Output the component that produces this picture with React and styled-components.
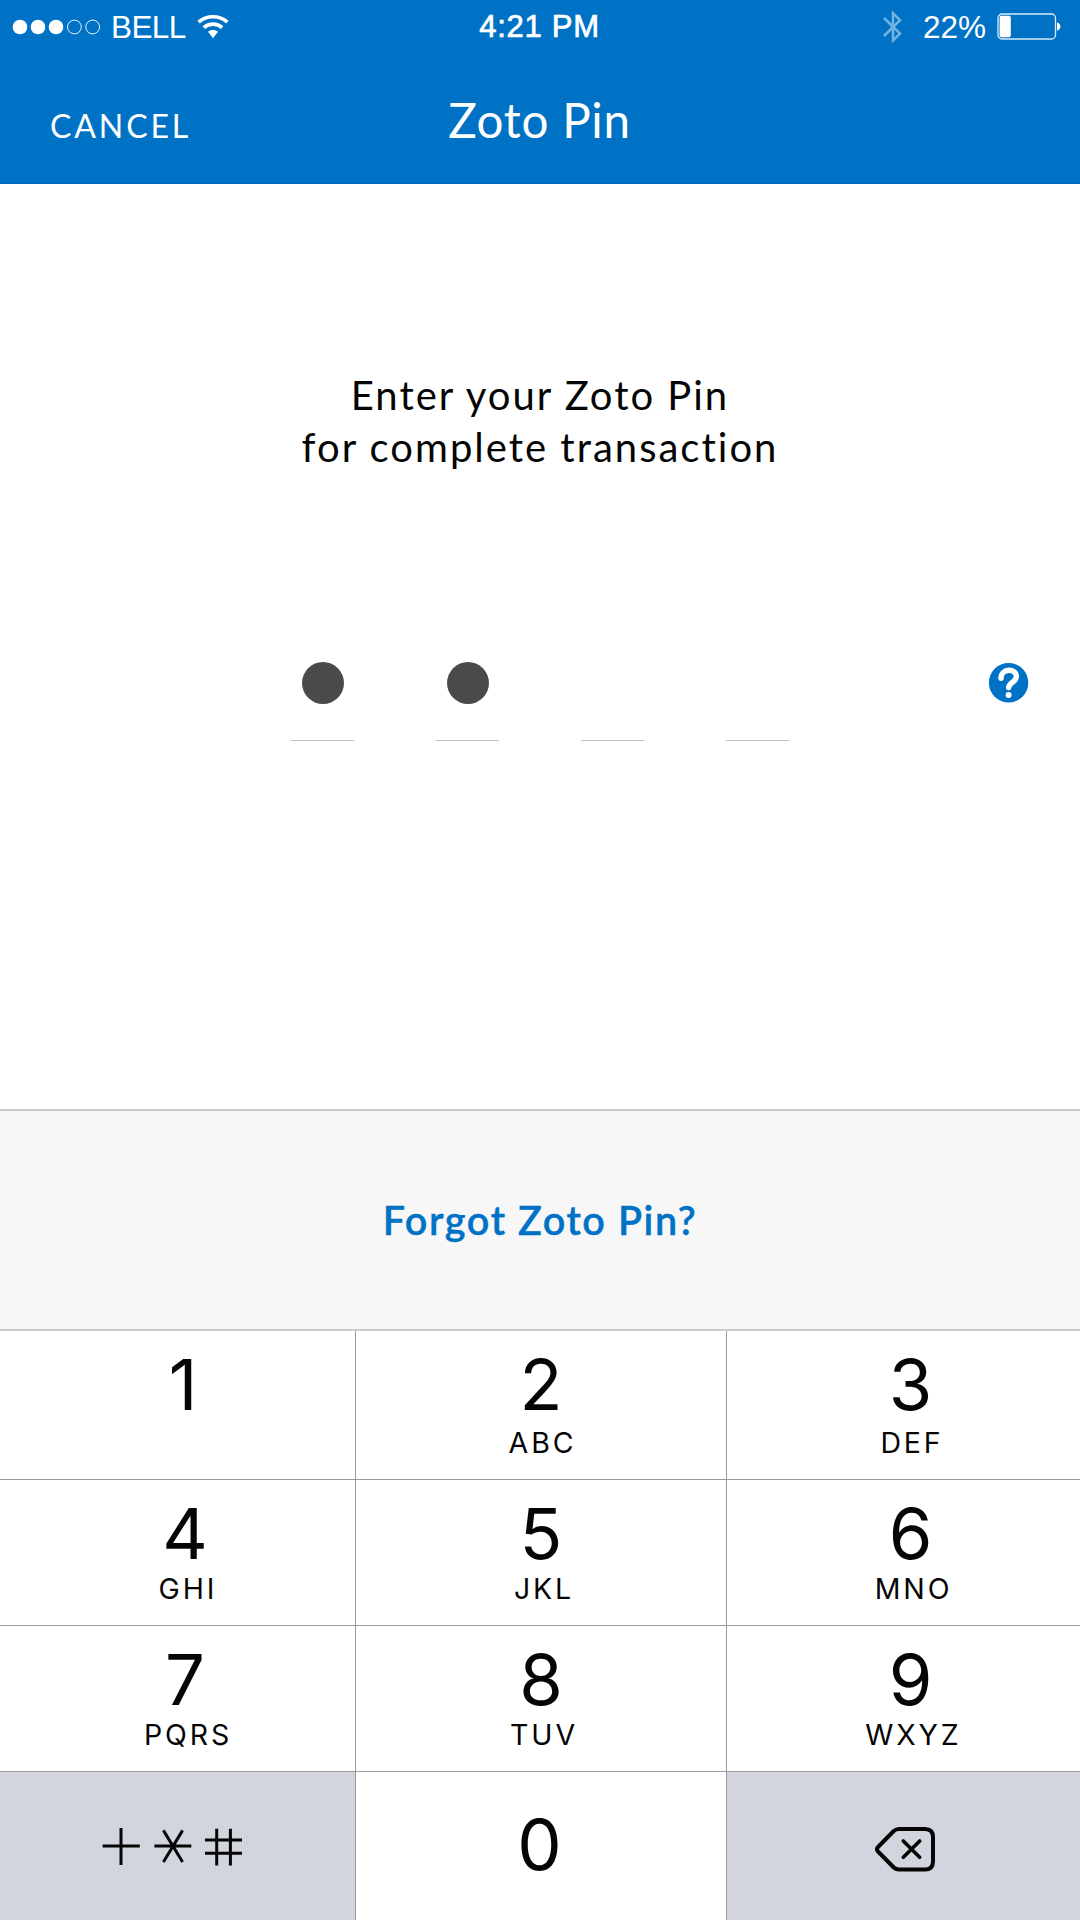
import React from "react";
import styled, { createGlobalStyle } from "styled-components";

const GlobalStyle = createGlobalStyle`
  *, *::before, *::after { box-sizing: border-box; }
  body { margin: 0; background: #fff; }
  button { border: 0; margin: 0; padding: 0; background: none; color: inherit; font: inherit; }
  svg { display: block; flex: none; }
`;

const Screen = styled.div`
  width: 1080px;
  height: 1920px;
  display: flex;
  flex-direction: column;
  overflow: hidden;
  background: #fff;
  color: #050505;
  font-family: Lato, "Liberation Sans", sans-serif;
`;

const Header = styled.header`
  height: 184px;
  flex: none;
  background: #0072c6;
  border-bottom: 1px solid #0068bb;
  color: #fff;
`;

const StatusBar = styled.div`
  height: 52px;
  padding: 0 19px 0 12px;
  display: grid;
  grid-template-columns: 1fr auto 1fr;
  font-family: "Liberation Sans", Arial, sans-serif;
  font-size: 31.5px;
  line-height: 52px;
  white-space: nowrap;
`;

const StatusGroup = styled.div`
  display: flex;
  align-items: center;
  justify-content: ${(p) => (p.$end ? "flex-end" : "flex-start")};
`;

const Carrier = styled.span`
  margin: 0 11px 0 9px;
  letter-spacing: -0.6px;
`;

const Clock = styled.div`
  padding: 1px 0 0 6px;
  font-size: 31px;
  letter-spacing: 0.7px;
  -webkit-text-stroke: 0.7px #fff;
`;

const BatteryLevel = styled.span`
  margin: 0 11px 0 20px;
`;

const NavBar = styled.div`
  display: grid;
  grid-template-columns: 1fr auto 1fr;
  align-items: start;
  padding: 38px 51px 0 50px;
`;

const CancelButton = styled.button`
  justify-self: start;
  margin-top: 6px;
  font-size: 32px;
  line-height: 60px;
  letter-spacing: 2.9px;
`;

const Title = styled.h1`
  margin: 0;
  font-size: 47.5px;
  font-weight: 400;
  line-height: 60px;
  letter-spacing: 0.8px;
`;

const Main = styled.main`
  flex: 1;
  display: flex;
  flex-direction: column;
  align-items: center;
  padding-top: 185px;
`;

const Prompt = styled.p`
  margin: 0;
  font-size: 40px;
  line-height: 52px;
  letter-spacing: 2px;
  text-align: center;
`;

const PinRow = styled.div`
  width: 100%;
  margin-top: 189px;
  padding: 0 51px 0 291px;
  display: flex;
  justify-content: space-between;
`;

const PinSlots = styled.div`
  display: flex;
  gap: 82px;
`;

const PinSlot = styled.div`
  width: 63px;
  height: 79px;
  display: flex;
  justify-content: center;
  border-bottom: 1px solid #c0c0c0;
`;

const PinDot = styled.span`
  width: 42px;
  height: 42px;
  border-radius: 50%;
  background: #4a4a4a;
`;

const HelpButton = styled.button`
  width: 40px;
  height: 40px;
  margin-top: 1px;
`;

const ForgotPanel = styled.section`
  height: 222px;
  flex: none;
  display: flex;
  align-items: center;
  justify-content: center;
  border: solid #cbcbcb;
  border-width: 2px 0;
  background: #f7f7f7;
`;

const ForgotLink = styled.button`
  margin-bottom: 1px;
  color: #0072c6;
  font-size: 39.5px;
  font-weight: 600;
  line-height: 60px;
  letter-spacing: 1.6px;
  -webkit-text-stroke: 0.4px #0072c6;
`;

const Keypad = styled.div`
  height: 589px;
  flex: none;
  display: grid;
  grid-template-columns: 356px 371px 353px;
  grid-template-rows: 149px 146px 146px 148px;
  font-family: Inter, "Liberation Sans", sans-serif;
`;

const Key = styled.button`
  display: flex;
  flex-direction: column;
  align-items: center;
  padding-top: 14px;
  padding-left: ${(p) => p.$inset || 0}px;
  border-right: ${(p) => (p.$last ? 0 : 1)}px solid #999;
  border-bottom: 1px solid #999;
`;

const BottomKey = styled(Key)`
  justify-content: center;
  padding: ${(p) => p.$pad};
  border-bottom: 0;
  background: ${(p) => (p.$muted ? "#d2d5dd" : "#fff")};
`;

const Digit = styled.span`
  font-size: 70.5px;
  line-height: 80px;
`;

const Letters = styled.span`
  margin-top: ${(p) => (p.$firstRow ? 3 : 0)}px;
  padding-left: ${(p) => (p.$firstRow ? 3 : 6)}px;
  font-size: 28.5px;
  line-height: 30px;
  letter-spacing: 2.9px;
`;

const SignalDots = () => (
  <svg width="90" height="18" viewBox="12 17 90 18">
    {[20, 38, 56].map((x) => (
      <circle key={x} cx={x} cy="26" r="7.3" fill="#fff" />
    ))}
    {[74.4, 92.7].map((x) => (
      <circle key={x} cx={x} cy="26" r="6.9" fill="none" stroke="#fff" strokeWidth="0.9" />
    ))}
  </svg>
);

const WifiIcon = () => (
  <svg width="32" height="26" viewBox="0 0 32 26" fill="none" stroke="#fff" strokeWidth="3.6">
    <path d="M1.6 8.2 C9.6 0.9 22.4 0.9 30.4 8.2" />
    <path d="M6.8 13.6 C12 8.9 20 8.9 25.2 13.6" />
    <path d="M11 17.8 C13.8 15.4 18.2 15.4 21 17.8 L16 24.2 Z" fill="#fff" stroke="none" />
  </svg>
);

const BluetoothIcon = () => (
  <svg width="20" height="34" viewBox="0 0 20 34" fill="none" stroke="#fff" strokeWidth="2.5" opacity="0.45">
    <path d="M1 8 L17 23.6 L10 30.6 V3.2 L17 10.2 L1 26" />
  </svg>
);

const BatteryIcon = () => (
  <svg width="64" height="27" viewBox="0 0 64 27">
    <rect x="1" y="1" width="57.5" height="25" rx="4" fill="none" stroke="#fff" strokeOpacity="0.85" strokeWidth="1.3" />
    <rect x="2.6" y="2.8" width="11.2" height="21.4" rx="2" fill="#fff" />
    <path d="M60 9.4 C64.6 10.4 64.6 16.8 60 17.8 Z" fill="#fff" />
  </svg>
);

const HelpIcon = () => (
  <svg width="40" height="40" viewBox="0 0 40 40">
    <circle cx="19.6" cy="19.7" r="19.7" fill="#0072c6" />
    <path
      d="M12 15.2 C12 4.9 27.4 5 27.4 13.6 C27.4 19 20.2 19.2 19.6 24.6"
      fill="none"
      stroke="#fff"
      strokeWidth="5.4"
      strokeLinecap="round"
      strokeLinejoin="round"
    />
    <circle cx="19.6" cy="32" r="3" fill="#fff" />
  </svg>
);

const SymbolsIcon = () => (
  <svg width="140" height="38" viewBox="102 1828 140 38" fill="none" stroke="#050505" strokeWidth="3">
    <path d="M102.6 1846 H139.8 M121 1828 V1865" />
    <path d="M154.4 1846 H191.3 M163.4 1830.4 L182.6 1862 M182.6 1830.4 L163.4 1862" />
    <path d="M205 1840 H242 M205 1853.2 H242 M216.7 1828.7 V1865.5 M230.4 1828.7 V1865.5" />
  </svg>
);

const BackspaceIcon = () => (
  <svg width="60" height="46" viewBox="875 1826 60 46" fill="none" stroke="#050505" strokeWidth="4" strokeLinecap="round" strokeLinejoin="round">
    <path d="M899 1829 H925 Q933 1829 933 1837 V1861.5 Q933 1869.5 925 1869.5 H899 Q896 1869.5 893.8 1867.5 L878 1851.5 Q876 1849.2 878 1847 L893.8 1831 Q896 1829 899 1829 Z" />
    <path d="M903.3 1841 L919.7 1857.3 M919.7 1841 L903.3 1857.3" strokeWidth="3.6" />
  </svg>
);

const KEYS = [
  ["1", ""], ["2", "ABC"], ["3", "DEF"],
  ["4", "GHI"], ["5", "JKL"], ["6", "MNO"],
  ["7", "PQRS"], ["8", "TUV"], ["9", "WXYZ"],
];

const COLUMN_INSETS = [15, 0, 14];

const PIN_LENGTH = 4;
const ENTERED = 2;

export default function App() {
  return (
    <Screen>
      <GlobalStyle />
      <Header>
        <StatusBar>
          <StatusGroup>
            <SignalDots />
            <Carrier>BELL</Carrier>
            <WifiIcon />
          </StatusGroup>
          <Clock>4:21 PM</Clock>
          <StatusGroup $end>
            <BluetoothIcon />
            <BatteryLevel>22%</BatteryLevel>
            <BatteryIcon />
          </StatusGroup>
        </StatusBar>
        <NavBar>
          <CancelButton>CANCEL</CancelButton>
          <Title>Zoto Pin</Title>
        </NavBar>
      </Header>
      <Main>
        <Prompt>
          Enter your Zoto Pin
          <br />
          for complete transaction
        </Prompt>
        <PinRow>
          <PinSlots>
            {Array.from({ length: PIN_LENGTH }, (_, i) => (
              <PinSlot key={i}>{i < ENTERED && <PinDot />}</PinSlot>
            ))}
          </PinSlots>
          <HelpButton aria-label="Help">
            <HelpIcon />
          </HelpButton>
        </PinRow>
      </Main>
      <ForgotPanel>
        <ForgotLink>Forgot Zoto Pin?</ForgotLink>
      </ForgotPanel>
      <Keypad>
        {KEYS.map(([digit, letters], i) => (
          <Key key={digit} $inset={digit === "1" ? 11 : COLUMN_INSETS[i % 3]} $last={i % 3 === 2}>
            <Digit>{digit}</Digit>
            {letters && <Letters $firstRow={i < 3}>{letters}</Letters>}
          </Key>
        ))}
        <BottomKey $muted $pad="2px 11px 0 0" aria-label="Symbols">
          <SymbolsIcon />
        </BottomKey>
        <BottomKey $pad="0 3px 3px 0">
          <Digit>0</Digit>
        </BottomKey>
        <BottomKey $muted $last $pad="6px 0 0 3px" aria-label="Delete">
          <BackspaceIcon />
        </BottomKey>
      </Keypad>
    </Screen>
  );
}
